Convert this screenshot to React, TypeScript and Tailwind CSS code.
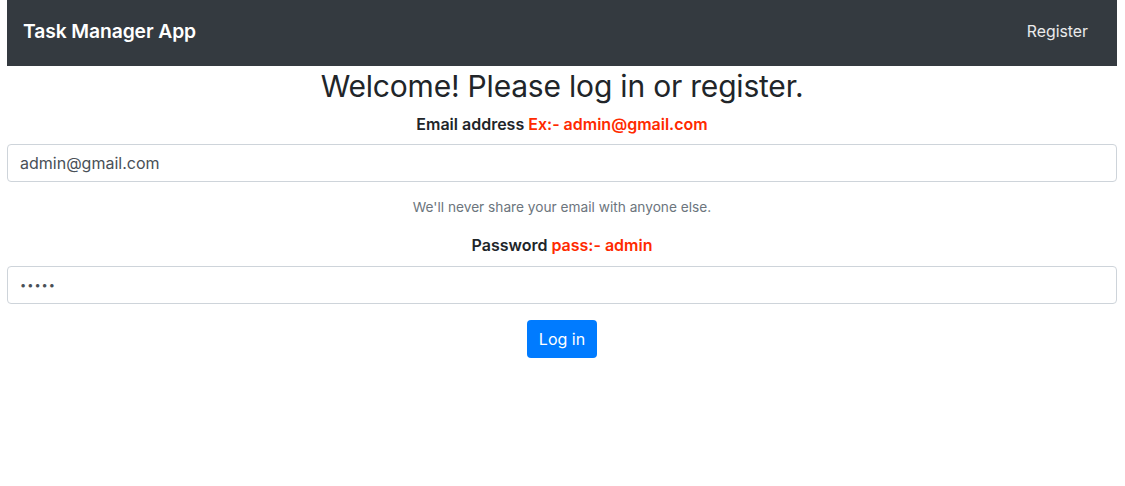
import React from "react";

export default function App() {
  return (
    <div className="min-h-[486px] bg-white font-['Inter',sans-serif] text-[#212529]">
      <div className="ml-[7px] w-[1110px]">
        <nav className="h-[66px] bg-[#343a40] flex items-center justify-between pl-4 pr-[29px] pb-[3px]">
          <span className="text-[19.3px] font-semibold text-white tracking-[-0.1px]">Task Manager App</span>
          <span className="text-[15.8px] text-white/90">Register</span>
        </nav>

        <form className="text-center" onSubmit={(e) => e.preventDefault()}>
          <h2 className="text-[30px] leading-[38px] font-normal pt-[1px] mb-[7px] tracking-[-0.2px]">Welcome! Please log in or register.</h2>

          <label className="block text-base leading-6 font-semibold mb-2">
            Email address <span className="text-[#ff2a00]">Ex:- admin@gmail.com</span>
          </label>
          <input
            type="email"
            defaultValue="admin@gmail.com"
            className="block w-full h-[38px] px-3 border border-[#ced4da] rounded text-base text-[#495057] text-left outline-none"
          />
          <small className="block text-[13.7px] leading-[21px] text-[#6c757d] mt-[15px] mb-[15px]">
            We'll never share your email with anyone else.
          </small>

          <label className="block text-base leading-6 font-semibold mb-[9px]">
            Password <span className="text-[#ff2a00]">pass:- admin</span>
          </label>
          <input
            type="password"
            defaultValue="admin"
            className="block w-full h-[38px] px-3 border border-[#ced4da] rounded text-[11px] tracking-[1px] text-[#495057] text-left outline-none"
          />

          <button
            type="submit"
            className="mt-4 h-[38px] w-[70px] rounded bg-[#007bff] text-white text-base"
          >
            Log in
          </button>
        </form>
      </div>
    </div>
  );
}
